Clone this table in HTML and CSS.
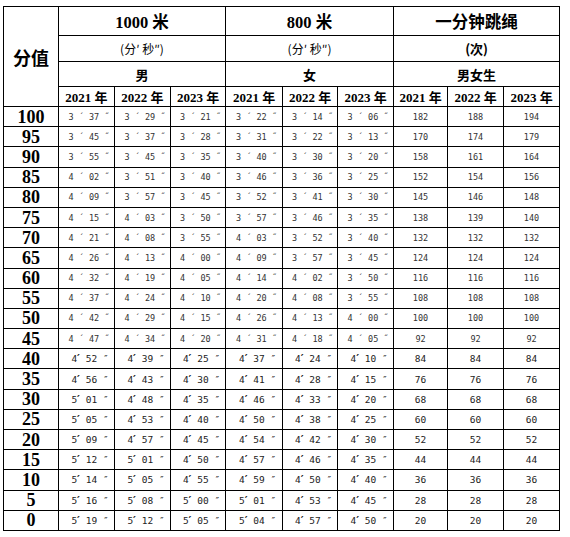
FILE: index.html
```html
<!DOCTYPE html>
<html lang="zh">
<head>
<meta charset="utf-8">
<title>评分标准</title>
<link rel="stylesheet" href="styles.css">
</head>
<body>
<div class="page">
<table class="score">
<colgroup>
<col class="c-score"><col class="c56"><col class="c56"><col class="c55"><col class="c57"><col class="c55"><col class="c56"><col class="c54"><col class="c56"><col class="c56">
</colgroup>
<thead>
<tr class="h1">
<th rowspan="4" class="label">分值</th>
<th colspan="3" class="event">1000 米</th>
<th colspan="3" class="event">800 米</th>
<th colspan="3" class="event">一分钟跳绳</th>
</tr>
<tr class="h2">
<th colspan="3" class="unit">(分′ 秒″)</th>
<th colspan="3" class="unit">(分′ 秒″)</th>
<th colspan="3" class="unit bold">(次)</th>
</tr>
<tr class="h3">
<th colspan="3" class="sex">男</th>
<th colspan="3" class="sex">女</th>
<th colspan="3" class="sex">男女生</th>
</tr>
<tr class="h4">
<th class="year">2021 年</th><th class="year">2022 年</th><th class="year">2023 年</th>
<th class="year">2021 年</th><th class="year">2022 年</th><th class="year">2023 年</th>
<th class="year">2021 年</th><th class="year">2022 年</th><th class="year">2023 年</th>
</tr>
</thead>
<tbody class="upper">
<tr><th>100</th><td>3 ´ 37 ˝</td><td>3 ´ 29 ˝</td><td>3 ´ 21 ˝</td><td>3 ´ 22 ˝</td><td>3 ´ 14 ˝</td><td>3 ´ 06 ˝</td><td class="n">182</td><td class="n">188</td><td class="n">194</td></tr>
<tr><th>95</th><td>3 ´ 45 ˝</td><td>3 ´ 37 ˝</td><td>3 ´ 28 ˝</td><td>3 ´ 31 ˝</td><td>3 ´ 22 ˝</td><td>3 ´ 13 ˝</td><td class="n">170</td><td class="n">174</td><td class="n">179</td></tr>
<tr><th>90</th><td>3 ´ 55 ˝</td><td>3 ´ 45 ˝</td><td>3 ´ 35 ˝</td><td>3 ´ 40 ˝</td><td>3 ´ 30 ˝</td><td>3 ´ 20 ˝</td><td class="n">158</td><td class="n">161</td><td class="n">164</td></tr>
<tr><th>85</th><td>4 ´ 02 ˝</td><td>3 ´ 51 ˝</td><td>3 ´ 40 ˝</td><td>3 ´ 46 ˝</td><td>3 ´ 36 ˝</td><td>3 ´ 25 ˝</td><td class="n">152</td><td class="n">154</td><td class="n">156</td></tr>
<tr><th>80</th><td>4 ´ 09 ˝</td><td>3 ´ 57 ˝</td><td>3 ´ 45 ˝</td><td>3 ´ 52 ˝</td><td>3 ´ 41 ˝</td><td>3 ´ 30 ˝</td><td class="n">145</td><td class="n">146</td><td class="n">148</td></tr>
<tr><th>75</th><td>4 ´ 15 ˝</td><td>4 ´ 03 ˝</td><td>3 ´ 50 ˝</td><td>3 ´ 57 ˝</td><td>3 ´ 46 ˝</td><td>3 ´ 35 ˝</td><td class="n">138</td><td class="n">139</td><td class="n">140</td></tr>
<tr><th>70</th><td>4 ´ 21 ˝</td><td>4 ´ 08 ˝</td><td>3 ´ 55 ˝</td><td>4 ´ 03 ˝</td><td>3 ´ 52 ˝</td><td>3 ´ 40 ˝</td><td class="n">132</td><td class="n">132</td><td class="n">132</td></tr>
<tr><th>65</th><td>4 ´ 26 ˝</td><td>4 ´ 13 ˝</td><td>4 ´ 00 ˝</td><td>4 ´ 09 ˝</td><td>3 ´ 57 ˝</td><td>3 ´ 45 ˝</td><td class="n">124</td><td class="n">124</td><td class="n">124</td></tr>
<tr><th>60</th><td>4 ´ 32 ˝</td><td>4 ´ 19 ˝</td><td>4 ´ 05 ˝</td><td>4 ´ 14 ˝</td><td>4 ´ 02 ˝</td><td>3 ´ 50 ˝</td><td class="n">116</td><td class="n">116</td><td class="n">116</td></tr>
<tr><th>55</th><td>4 ´ 37 ˝</td><td>4 ´ 24 ˝</td><td>4 ´ 10 ˝</td><td>4 ´ 20 ˝</td><td>4 ´ 08 ˝</td><td>3 ´ 55 ˝</td><td class="n">108</td><td class="n">108</td><td class="n">108</td></tr>
<tr><th>50</th><td>4 ´ 42 ˝</td><td>4 ´ 29 ˝</td><td>4 ´ 15 ˝</td><td>4 ´ 26 ˝</td><td>4 ´ 13 ˝</td><td>4 ´ 00 ˝</td><td class="n">100</td><td class="n">100</td><td class="n">100</td></tr>
<tr><th>45</th><td>4 ´ 47 ˝</td><td>4 ´ 34 ˝</td><td>4 ´ 20 ˝</td><td>4 ´ 31 ˝</td><td>4 ´ 18 ˝</td><td>4 ´ 05 ˝</td><td class="n">92</td><td class="n">92</td><td class="n">92</td></tr>
</tbody>
<tbody class="lower">
<tr><th>40</th><td>4<span class="p">′</span> 52 ″</td><td>4<span class="p">′</span> 39 ″</td><td>4<span class="p">′</span> 25 ″</td><td>4<span class="p">′</span> 37 ″</td><td>4<span class="p">′</span> 24 ″</td><td>4<span class="p">′</span> 10 ″</td><td class="n">84</td><td class="n">84</td><td class="n">84</td></tr>
<tr><th>35</th><td>4<span class="p">′</span> 56 ″</td><td>4<span class="p">′</span> 43 ″</td><td>4<span class="p">′</span> 30 ″</td><td>4<span class="p">′</span> 41 ″</td><td>4<span class="p">′</span> 28 ″</td><td>4<span class="p">′</span> 15 ″</td><td class="n">76</td><td class="n">76</td><td class="n">76</td></tr>
<tr><th>30</th><td>5<span class="p">′</span> 01 ″</td><td>4<span class="p">′</span> 48 ″</td><td>4<span class="p">′</span> 35 ″</td><td>4<span class="p">′</span> 46 ″</td><td>4<span class="p">′</span> 33 ″</td><td>4<span class="p">′</span> 20 ″</td><td class="n">68</td><td class="n">68</td><td class="n">68</td></tr>
<tr><th>25</th><td>5<span class="p">′</span> 05 ″</td><td>4<span class="p">′</span> 53 ″</td><td>4<span class="p">′</span> 40 ″</td><td>4<span class="p">′</span> 50 ″</td><td>4<span class="p">′</span> 38 ″</td><td>4<span class="p">′</span> 25 ″</td><td class="n">60</td><td class="n">60</td><td class="n">60</td></tr>
<tr><th>20</th><td>5<span class="p">′</span> 09 ″</td><td>4<span class="p">′</span> 57 ″</td><td>4<span class="p">′</span> 45 ″</td><td>4<span class="p">′</span> 54 ″</td><td>4<span class="p">′</span> 42 ″</td><td>4<span class="p">′</span> 30 ″</td><td class="n">52</td><td class="n">52</td><td class="n">52</td></tr>
<tr><th>15</th><td>5<span class="p">′</span> 12 ″</td><td>5<span class="p">′</span> 01 ″</td><td>4<span class="p">′</span> 50 ″</td><td>4<span class="p">′</span> 57 ″</td><td>4<span class="p">′</span> 46 ″</td><td>4<span class="p">′</span> 35 ″</td><td class="n">44</td><td class="n">44</td><td class="n">44</td></tr>
<tr><th>10</th><td>5<span class="p">′</span> 14 ″</td><td>5<span class="p">′</span> 05 ″</td><td>4<span class="p">′</span> 55 ″</td><td>4<span class="p">′</span> 59 ″</td><td>4<span class="p">′</span> 50 ″</td><td>4<span class="p">′</span> 40 ″</td><td class="n">36</td><td class="n">36</td><td class="n">36</td></tr>
<tr><th>5</th><td>5<span class="p">′</span> 16 ″</td><td>5<span class="p">′</span> 08 ″</td><td>5<span class="p">′</span> 00 ″</td><td>5<span class="p">′</span> 01 ″</td><td>4<span class="p">′</span> 53 ″</td><td>4<span class="p">′</span> 45 ″</td><td class="n">28</td><td class="n">28</td><td class="n">28</td></tr>
<tr><th>0</th><td>5<span class="p">′</span> 19 ″</td><td>5<span class="p">′</span> 12 ″</td><td>5<span class="p">′</span> 05 ″</td><td>5<span class="p">′</span> 04 ″</td><td>4<span class="p">′</span> 57 ″</td><td>4<span class="p">′</span> 50 ″</td><td class="n">20</td><td class="n">20</td><td class="n">20</td></tr>
</tbody>
</table>
</div>
</body>
</html>
```

FILE: styles.css
```css
html, body {
  margin: 0;
  padding: 0;
  background: #fff;
}

.page {
  padding: 6px 0 0 3px;
}

.score {
  border-collapse: collapse;
  table-layout: fixed;
  width: 556px;
  font-family: "Liberation Serif", "Noto Sans CJK SC", serif;
  color: #000;
}

.c-score { width: 55px; }
.c54 { width: 54px; }
.c55 { width: 55px; }
.c56 { width: 56px; }
.c57 { width: 57px; }

.score th,
.score td {
  border: 1px solid #000;
  padding: 0;
  text-align: center;
  vertical-align: middle;
  overflow: hidden;
  white-space: nowrap;
}

.h1 { height: 29px; }
.h2 { height: 26px; }
.h3 { height: 25px; }
.h4 { height: 20px; }

.label {
  font-family: "Noto Sans CJK SC", sans-serif;
  font-weight: bold;
  font-size: 18px;
}

.event {
  font-size: 16.5px;
  font-weight: bold;
}

.event:last-child {
  font-family: "Noto Sans CJK SC", sans-serif;
  font-size: 16.5px;
}

.unit {
  font-family: "Noto Sans CJK SC", sans-serif;
  font-weight: normal;
  font-size: 12px;
}

.unit.bold {
  font-weight: bold;
  font-size: 13px;
}

.sex {
  font-family: "Noto Sans CJK SC", sans-serif;
  font-weight: bold;
  font-size: 13px;
}

.year {
  font-size: 13px;
  font-weight: bold;
}

tbody tr { height: 20.2px; }

tbody th {
  font-family: "Liberation Serif", serif;
  font-weight: bold;
  font-size: 18px;
  line-height: 18px;
}

tbody td {
  font-family: "DejaVu Sans Mono", monospace;
  color: #222;
  white-space: pre;
  text-align: left;
}

.upper td {
  font-size: 8.5px;
  padding-left: 5px;
  color: #333;
}

.lower td {
  font-size: 9.5px;
  padding-left: 7px;
}

.p {
  font-family: "DejaVu Sans", sans-serif;
  font-weight: bold;
  font-size: 11px;
  line-height: 1;
}

tbody td.n {
  text-align: center;
  padding-left: 0;
}
```
